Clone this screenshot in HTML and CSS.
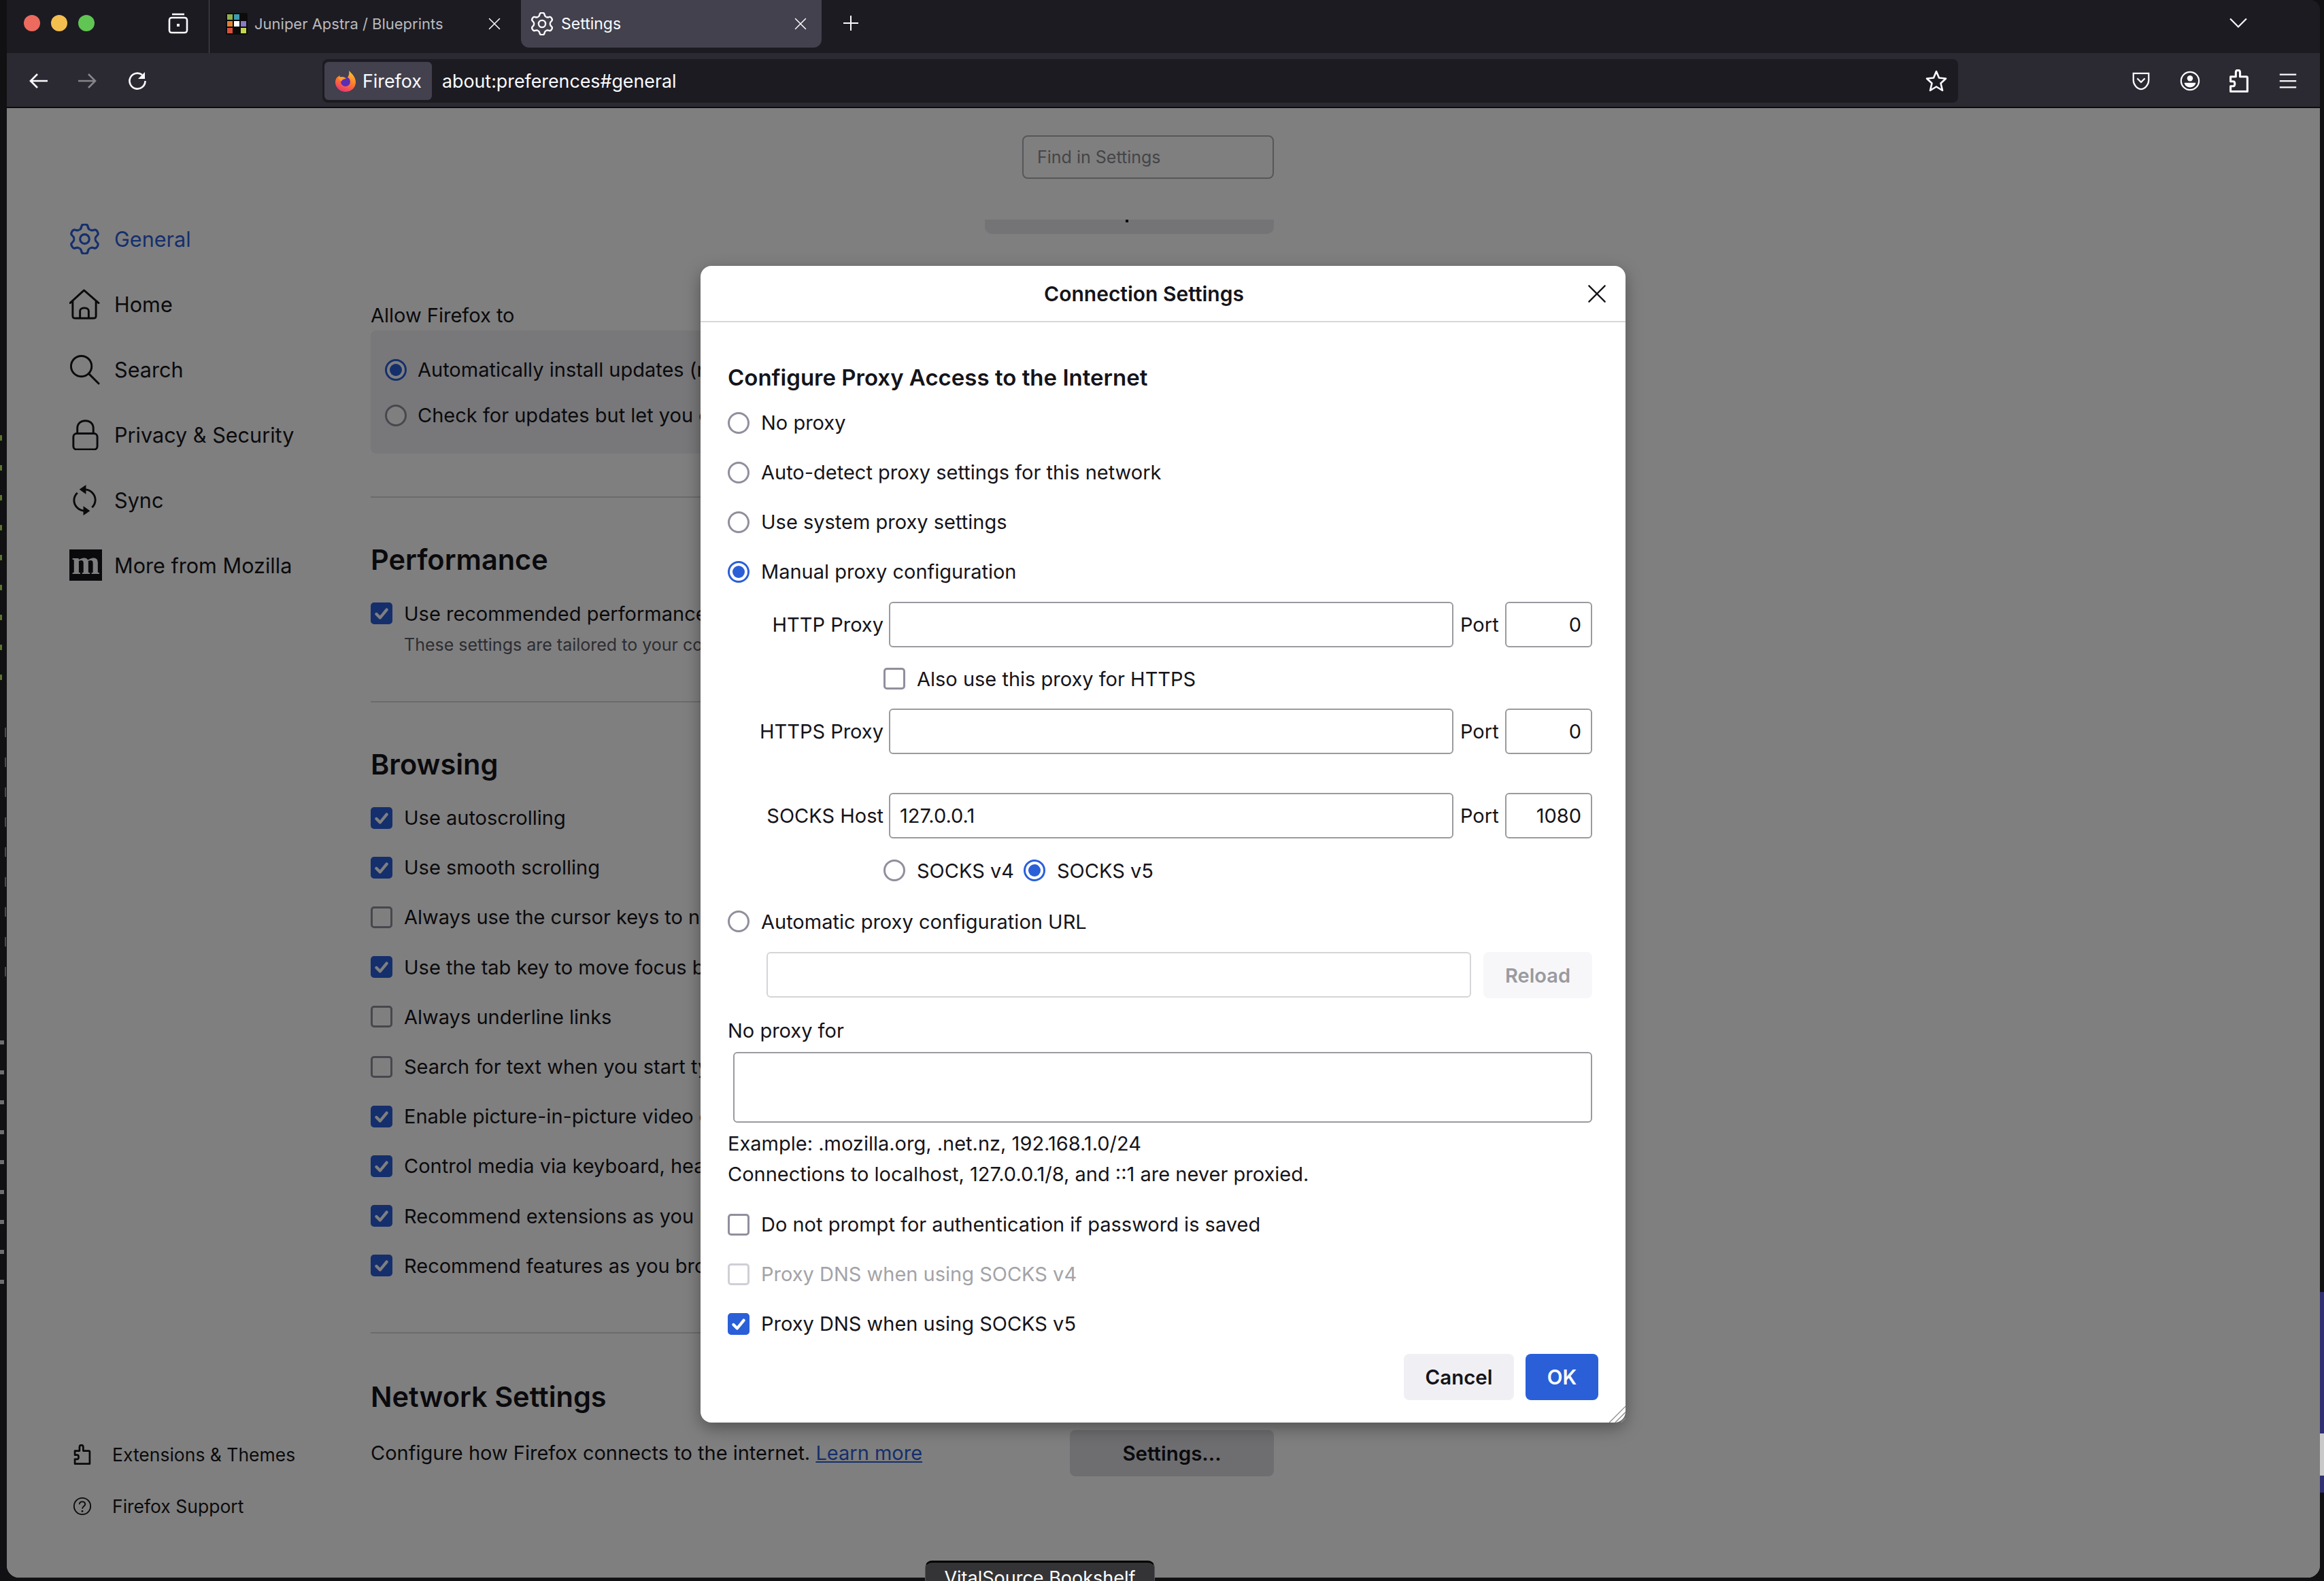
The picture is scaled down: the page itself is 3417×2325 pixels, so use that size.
FILE: index.html
```html
<!DOCTYPE html>
<html lang="en">
<head>
    <meta charset="UTF-8">
    <title>Settings</title>
    <link rel="stylesheet" href="styles.css">
</head>
<body>

    <svg class="sprite" width="0" height="0">
        <symbol id="gear" viewBox="2 1.4 20 21.2">
            <g fill="none" stroke="currentColor" stroke-width="1.5" stroke-linejoin="round">
                <path d="M8.25 5.5C9.5 5.2 9.6 4.5 9.8 3.3C10 1.3 14 1.3 14.2 3.3C14.4 4.5 14.5 5.2 15.75 5.5"/>
                <path d="M8.25 5.5C9.5 5.2 9.6 4.5 9.8 3.3C10 1.3 14 1.3 14.2 3.3C14.4 4.5 14.5 5.2 15.75 5.5" transform="rotate(60 12 12)"/>
                <path d="M8.25 5.5C9.5 5.2 9.6 4.5 9.8 3.3C10 1.3 14 1.3 14.2 3.3C14.4 4.5 14.5 5.2 15.75 5.5" transform="rotate(120 12 12)"/>
                <path d="M8.25 5.5C9.5 5.2 9.6 4.5 9.8 3.3C10 1.3 14 1.3 14.2 3.3C14.4 4.5 14.5 5.2 15.75 5.5" transform="rotate(180 12 12)"/>
                <path d="M8.25 5.5C9.5 5.2 9.6 4.5 9.8 3.3C10 1.3 14 1.3 14.2 3.3C14.4 4.5 14.5 5.2 15.75 5.5" transform="rotate(240 12 12)"/>
                <path d="M8.25 5.5C9.5 5.2 9.6 4.5 9.8 3.3C10 1.3 14 1.3 14.2 3.3C14.4 4.5 14.5 5.2 15.75 5.5" transform="rotate(300 12 12)"/>
                <circle cx="12" cy="12" r="3.2"/>
            </g>
        </symbol>
        <symbol id="puzzle" viewBox="3 1 18 22">
            <path fill="none" stroke="currentColor" stroke-width="2" stroke-linejoin="round" d="M4 22V17H6.5C8.5 17 8.5 12.5 6.5 12.5H4V8H9V4C9 1 13 1 13 4V8H19C20 8 20 8.5 20 9V22Z"/>
        </symbol>
        <symbol id="close" viewBox="0 0 24 24">
            <path fill="none" stroke="currentColor" stroke-width="2" stroke-linecap="round" d="M2 2L22 22M22 2L2 22"/>
        </symbol>
        <symbol id="tick" viewBox="0 0 24 24">
            <path fill="none" stroke="currentColor" stroke-width="4" stroke-linecap="round" stroke-linejoin="round" d="M5 13L10 18L19 7"/>
        </symbol>
    </svg>

    <div class="desktop">
        <div class="edge-left"></div>

        <div class="browser">
            <div class="tabbar">
                <div class="lights">
                    <span class="light red"></span>
                    <span class="light yellow"></span>
                    <span class="light green"></span>
                </div>
                <svg class="view-icon" viewBox="0 0 32 32">
                    <path fill="none" stroke="#fbfbfe" stroke-width="2.6" d="M3 12C3 9 4 8 7 8H25C28 8 29 9 29 12V26C29 29 28 30 25 30H7C4 30 3 29 3 26Z"/>
                    <path fill="none" stroke="#fbfbfe" stroke-width="2.6" d="M7 3H25"/>
                    <rect x="14" y="17" width="4" height="4" fill="#fbfbfe"/>
                </svg>
                <span class="tab-sep"></span>

                <div class="tab">
                    <svg class="favicon" viewBox="0 0 32 32">
                        <rect width="32" height="32" rx="2" fill="#0c0c0c"/>
                        <rect x="2" y="2" width="8" height="8" fill="#8fb04c"/>
                        <rect x="12" y="2" width="8" height="8" fill="#3f9bb0"/>
                        <rect x="2" y="12" width="8" height="8" fill="#e0822f"/>
                        <rect x="12" y="12" width="8" height="8" fill="#ffffff"/>
                        <rect x="22" y="12" width="8" height="8" fill="#8c78cc"/>
                        <rect x="2" y="22" width="8" height="8" fill="#d9503a"/>
                        <rect x="22" y="22" width="8" height="8" fill="#c6d64c"/>
                    </svg>
                    <span class="tab-title">Juniper Apstra / Blueprints</span>
                    <svg class="tab-close"><use href="#close"/></svg>
                </div>

                <div class="tab selected">
                    <svg class="tab-gear"><use href="#gear"/></svg>
                    <span class="tab-title">Settings</span>
                    <svg class="tab-close"><use href="#close"/></svg>
                </div>

                <svg class="new-tab" viewBox="0 0 24 24">
                    <path fill="none" stroke="#fbfbfe" stroke-width="2" d="M12 1V23M1 12H23"/>
                </svg>
                <svg class="tabs-menu" viewBox="0 0 24 14">
                    <path fill="none" stroke="#fbfbfe" stroke-width="2" d="M1 1L12 12L23 1"/>
                </svg>
            </div>

            <div class="toolbar">
                <svg class="nav-icon" viewBox="0 0 30 30">
                    <path fill="none" stroke="#fbfbfe" stroke-width="2.6" d="M28 15H4M13 5L3 15L13 25"/>
                </svg>
                <svg class="nav-icon off" viewBox="0 0 30 30">
                    <path fill="none" stroke="#85858b" stroke-width="2.6" d="M2 15H26M17 5L27 15L17 25"/>
                </svg>
                <svg class="nav-icon" viewBox="0 0 30 30">
                    <path fill="none" stroke="#fbfbfe" stroke-width="2.6" d="M22 6A11.5 11.5 0 1 0 26.5 15"/>
                    <path fill="#fbfbfe" d="M26 2V12H16Z"/>
                </svg>

                <div class="urlbar">
                    <div class="identity">
                        <svg class="fx-logo" viewBox="0 0 32 32">
                            <defs>
                                <linearGradient id="fxBody" x1="0.7" y1="0" x2="0.3" y2="1">
                                    <stop offset="0" stop-color="#ffc22e"/>
                                    <stop offset="0.5" stop-color="#ff7a2a"/>
                                    <stop offset="1" stop-color="#e8307a"/>
                                </linearGradient>
                            </defs>
                            <path fill="url(#fxBody)" d="M21 1C25 5 31 10 31 18A15 14 0 1 1 2 13C3 11 5 9 8 8L7 12C11 9 15 10 18 12C21 9 22 5 21 1Z"/>
                            <circle cx="16" cy="17" r="7" fill="#5a2db4"/>
                            <path fill="#ff9a2a" d="M5 11C9 9 15 10 17 13C13 13 11 14 10 17C8 15 6 13 5 11Z"/>
                        </svg>
                        <span>Firefox</span>
                    </div>
                    <span class="url">about:preferences#general</span>
                    <svg class="star" viewBox="0 0 32 32">
                        <path fill="none" stroke="#fbfbfe" stroke-width="2.6" stroke-linejoin="round" d="M16 2L20 11.5L30 12.5L22.5 19.5L25 30L16 24.5L7 30L9.5 19.5L2 12.5L12 11.5Z"/>
                    </svg>
                </div>

                <div class="toolbar-right">
                    <svg class="tool-icon" viewBox="0 0 32 32">
                        <path fill="none" stroke="#fbfbfe" stroke-width="2.4" d="M4 4H28V15C28 22 22 29 16 29C10 29 4 22 4 15Z"/>
                        <path fill="none" stroke="#fbfbfe" stroke-width="2.4" d="M10 12L16 18L22 12"/>
                    </svg>
                    <svg class="tool-icon" viewBox="0 0 32 32">
                        <circle cx="16" cy="16" r="14" fill="none" stroke="#fbfbfe" stroke-width="2.4"/>
                        <circle cx="16" cy="12" r="4.5" fill="#fbfbfe"/>
                        <path fill="#fbfbfe" d="M7 19H25C24 24 20 26 16 26C12 26 8 24 7 19Z"/>
                    </svg>
                    <svg class="tool-icon puzzle-tool"><use href="#puzzle"/></svg>
                    <svg class="tool-icon" viewBox="0 0 32 32">
                        <path fill="none" stroke="#fbfbfe" stroke-width="2.4" d="M3 6H29M3 16H29M3 26H29"/>
                    </svg>
                </div>
            </div>

            <div class="content">
                <aside class="sidebar">
                    <nav class="cats">
                        <a class="cat active">
                            <svg class="cat-icon"><use href="#gear"/></svg>
                            General
                        </a>
                        <a class="cat">
                            <svg class="cat-icon" viewBox="0 0 46 46">
                                <path fill="none" stroke="currentColor" stroke-width="3" stroke-linejoin="round" stroke-linecap="round" d="M1 21L22 2L44 21M5 18V40C5 43 6 44 9 44H36C39 44 40 43 40 40V18M16 44V33C16 27 29 27 29 33V44"/>
                            </svg>
                            Home
                        </a>
                        <a class="cat">
                            <svg class="cat-icon" viewBox="0 0 46 46">
                                <circle cx="18" cy="18" r="15.5" fill="none" stroke="currentColor" stroke-width="3"/>
                                <path fill="none" stroke="currentColor" stroke-width="3" stroke-linecap="round" d="M29 29L44 44"/>
                            </svg>
                            Search
                        </a>
                        <a class="cat">
                            <svg class="cat-icon" viewBox="0 0 46 46">
                                <rect x="6" y="21" width="36" height="24" rx="5" fill="none" stroke="currentColor" stroke-width="3"/>
                                <path fill="none" stroke="currentColor" stroke-width="3" d="M12 21V13C12 -2 36 -2 36 13V21"/>
                            </svg>
                            Privacy &amp; Security
                        </a>
                        <a class="cat">
                            <svg class="cat-icon" viewBox="0 0 46 46">
                                <path fill="none" stroke="currentColor" stroke-width="3" d="M23 7A16 16 0 0 1 39 23A16 16 0 0 1 34 34M23 39A16 16 0 0 1 7 23A16 16 0 0 1 12 12"/>
                                <path fill="currentColor" d="M25 0V14L15 7ZM21 32V46L31 39Z"/>
                            </svg>
                            Sync
                        </a>
                        <a class="cat">
                            <span class="moz-logo">m</span>
                            More from Mozilla
                        </a>
                    </nav>

                    <div class="side-footer">
                        <a class="foot-link">
                            <svg class="foot-icon"><use href="#puzzle"/></svg>
                            Extensions &amp; Themes
                        </a>
                        <a class="foot-link">
                            <svg class="foot-icon" viewBox="0 0 30 30">
                                <circle cx="15" cy="15" r="13" fill="none" stroke="currentColor" stroke-width="2"/>
                                <path fill="none" stroke="currentColor" stroke-width="2" d="M10.5 12C10.5 6.5 19.5 6.5 19.5 12C19.5 15 15 15 15 19"/>
                                <circle cx="15" cy="23" r="1.5" fill="currentColor"/>
                            </svg>
                            Firefox Support
                        </a>
                    </div>
                </aside>

                <main class="prefs">
                    <div class="find-row">
                        <input class="find" type="text" placeholder="Find in Settings">
                    </div>
                    <div class="clipped-btn"><i></i></div>

                    <p class="allow-label">Allow Firefox to</p>
                    <div class="update-box">
                        <div class="pref update-row"><span class="radio on"></span>Automatically install updates (recommended)</div>
                        <div class="pref update-row"><span class="radio"></span>Check for updates but let you choose to install them</div>
                    </div>

                    <hr class="rule">

                    <h2 class="pref-head">Performance</h2>
                    <div class="pref perf-row"><span class="check on"><svg><use href="#tick"/></svg></span>Use recommended performance settings</div>
                    <p class="pref-sub">These settings are tailored to your computer's hardware and operating system.</p>

                    <hr class="rule">

                    <h2 class="pref-head">Browsing</h2>
                    <div class="browse-list">
                        <div class="pref browse-row"><span class="check on"><svg><use href="#tick"/></svg></span>Use autoscrolling</div>
                        <div class="pref browse-row"><span class="check on"><svg><use href="#tick"/></svg></span>Use smooth scrolling</div>
                        <div class="pref browse-row"><span class="check"></span>Always use the cursor keys to navigate within pages</div>
                        <div class="pref browse-row"><span class="check on"><svg><use href="#tick"/></svg></span>Use the tab key to move focus between form controls</div>
                        <div class="pref browse-row"><span class="check"></span>Always underline links</div>
                        <div class="pref browse-row"><span class="check"></span>Search for text when you start typing</div>
                        <div class="pref browse-row"><span class="check on"><svg><use href="#tick"/></svg></span>Enable picture-in-picture video controls</div>
                        <div class="pref browse-row"><span class="check on"><svg><use href="#tick"/></svg></span>Control media via keyboard, headset, or virtual interface</div>
                        <div class="pref browse-row"><span class="check on"><svg><use href="#tick"/></svg></span>Recommend extensions as you browse</div>
                        <div class="pref browse-row"><span class="check on"><svg><use href="#tick"/></svg></span>Recommend features as you browse</div>
                    </div>

                    <hr class="rule">

                    <h2 class="pref-head net-head">Network Settings</h2>
                    <div class="net-row">
                        <span class="pref">Configure how Firefox connects to the internet.&nbsp;<a class="learn">Learn more</a></span>
                        <button class="settings-btn">Settings...</button>
                    </div>
                </main>

                <div class="scrim"></div>

                <div class="dialog">
                    <div class="dialog-head">
                        <div class="dialog-title">Connection Settings</div>
                        <div class="dialog-close"><svg><use href="#close"/></svg></div>
                    </div>

                    <div class="dialog-body">
                        <h3 class="proxy-head">Configure Proxy Access to the Internet</h3>

                        <div class="proxy-modes">
                            <div class="opt"><span class="radio"></span>No proxy</div>
                            <div class="opt"><span class="radio"></span>Auto-detect proxy settings for this network</div>
                            <div class="opt"><span class="radio"></span>Use system proxy settings</div>
                            <div class="opt"><span class="radio on"></span>Manual proxy configuration</div>
                        </div>

                        <div class="proxy-row http-row">
                            <label class="proxy-label">HTTP Proxy</label>
                            <input class="field grow" type="text">
                            <label class="port-label">Port</label>
                            <input class="field port" type="text" value="0">
                        </div>
                        <div class="opt indented also-row"><span class="check"></span>Also use this proxy for HTTPS</div>
                        <div class="proxy-row https-row">
                            <label class="proxy-label">HTTPS Proxy</label>
                            <input class="field grow" type="text">
                            <label class="port-label">Port</label>
                            <input class="field port" type="text" value="0">
                        </div>
                        <div class="proxy-row socks-row">
                            <label class="proxy-label">SOCKS Host</label>
                            <input class="field grow" type="text" value="127.0.0.1">
                            <label class="port-label">Port</label>
                            <input class="field port" type="text" value="1080">
                        </div>
                        <div class="opt indented socks-versions">
                            <span class="radio"></span>SOCKS v4
                            <span class="radio on second"></span>SOCKS v5
                        </div>

                        <div class="opt auto-row"><span class="radio"></span>Automatic proxy configuration URL</div>
                        <div class="url-row">
                            <input class="field grow faded" type="text">
                            <button class="reload-btn">Reload</button>
                        </div>

                        <div class="line no-proxy-label">No proxy for</div>
                        <textarea class="no-proxy"></textarea>
                        <div class="line example">Example: .mozilla.org, .net.nz, 192.168.1.0/24</div>
                        <div class="line never">Connections to localhost, 127.0.0.1/8, and ::1 are never proxied.</div>

                        <div class="auth-list">
                            <div class="opt"><span class="check"></span>Do not prompt for authentication if password is saved</div>
                            <div class="opt disabled"><span class="check"></span>Proxy DNS when using SOCKS v4</div>
                            <div class="opt"><span class="check on"><svg><use href="#tick"/></svg></span>Proxy DNS when using SOCKS v5</div>
                        </div>

                        <div class="dialog-buttons">
                            <button class="btn">Cancel</button>
                            <button class="btn primary">OK</button>
                        </div>
                    </div>

                    <svg class="resizer" viewBox="0 0 24 24">
                        <path fill="none" stroke="#8a8a8a" stroke-width="1.2" d="M24 2L2 24M24 10L10 24M24 18L18 24"/>
                    </svg>
                </div>
            </div>
        </div>

        <div class="edge-right">
            <div class="wall"><i></i></div>
        </div>

        <div class="dock-tip">VitalSource Bookshelf</div>
    </div>

</body>
</html>
```

FILE: styles.css
```css
* {
    box-sizing: border-box;
}

html, body {
    margin: 0;
    height: 100%;
}

body {
    background: #111113;
    font-family: Inter, "Noto Sans", sans-serif;
    color: #15141a;
    overflow: hidden;
}

.sprite {
    position: absolute;
}

.desktop {
    position: relative;
    display: flex;
    width: 3417px;
    height: 2325px;
    overflow: hidden;
}

.edge-left {
    width: 10px;
    height: 2320px;
    flex: none;
    background:
        repeating-linear-gradient(#5d7330 0 8px, transparent 8px 44px) 0 640px / 3px 370px no-repeat,
        repeating-linear-gradient(#4c4c4c 0 14px, transparent 14px 44px) 7px 1070px / 2px 390px no-repeat,
        repeating-linear-gradient(#6e6e6e 0 6px, transparent 6px 44px) 0 1530px / 6px 370px no-repeat,
        #111113;
}

.edge-right {
    flex: none;
    width: 6px;
    display: flex;
    flex-direction: column;
    padding-top: 1900px;
}

.wall {
    height: 295px;
    background: #2f2f72;
    padding-top: 208px;
}

.wall i {
    display: block;
    height: 62px;
    background: #c9c9c9;
}

.browser {
    flex: none;
    width: 3401px;
    height: 2320px;
    display: flex;
    flex-direction: column;
    border-radius: 0 14px 18px 18px;
    overflow: hidden;
}

/* tab strip */
.tabbar {
    display: flex;
    align-items: center;
    height: 78px;
    flex: none;
    background: #1c1b22;
    padding-left: 25px;
}

.lights {
    display: flex;
    gap: 16px;
    width: 211px;
    margin-top: -10px;
}

.light {
    width: 24px;
    height: 24px;
    border-radius: 50%;
}

.red { background: #ed6a5e; }
.yellow { background: #f4bf4f; }
.green { background: #61c554; }

.view-icon {
    width: 32px;
    height: 32px;
    margin: -10px 29px 0 0;
}

.tab-sep {
    width: 1px;
    height: 78px;
    background: #4a4a50;
}

.tab {
    display: flex;
    align-items: center;
    width: 450px;
    height: 70px;
    margin-top: -8px;
    padding-left: 24px;
    font-size: 22px;
    color: #b9b9bd;
}

.tab.selected {
    width: 442px;
    padding-left: 15px;
    margin-left: 8px;
    font-size: 23px;
    color: #fbfbfe;
    background: #42414d;
    border-radius: 0 0 12px 12px;
}

.favicon {
    width: 32px;
    height: 32px;
    margin-right: 10px;
}

.tab-gear {
    width: 32px;
    height: 34px;
    margin-right: 12px;
}

.tab-title {
    flex: 1;
    white-space: nowrap;
}

.tab-close {
    width: 18px;
    height: 18px;
    margin-right: 22px;
    color: #fbfbfe;
}

.new-tab {
    width: 24px;
    height: 24px;
    margin: -10px 0 0 31px;
}

.tabs-menu {
    width: 26px;
    height: 16px;
    margin: -10px 107px 0 auto;
}

/* nav bar */
.toolbar {
    display: flex;
    align-items: center;
    height: 81px;
    flex: none;
    background: #2b2a33;
    border-bottom: 2px solid #0c0c0e;
    padding: 2px 0 0 32px;
}

.nav-icon {
    width: 30px;
    height: 30px;
    margin-right: 41px;
}

.nav-icon:nth-child(3) {
    margin-right: 0;
    margin-left: 3px;
}

.urlbar {
    display: flex;
    align-items: center;
    width: 2405px;
    height: 64px;
    margin-left: 257px;
    padding-left: 3px;
    background: #1c1b22;
    border-radius: 8px;
    color: #fbfbfe;
    font-size: 26.8px;
}

.identity {
    display: flex;
    align-items: center;
    gap: 9px;
    height: 56px;
    width: 158px;
    padding-left: 15px;
    background: #42414d;
    border-radius: 6px;
}

.fx-logo {
    width: 32px;
    height: 34px;
}

.url {
    margin-left: 15px;
}

.star {
    width: 32px;
    height: 32px;
    margin-left: auto;
    margin-right: 16px;
}

.toolbar-right {
    display: flex;
    align-items: center;
    gap: 42px;
    margin-left: 254px;
    color: #fbfbfe;
}

.tool-icon {
    width: 30px;
    height: 32px;
}

.puzzle-tool {
    height: 34px;
}

/* settings page */
.content {
    position: relative;
    flex: 1;
    display: flex;
    background: #ffffff;
    overflow: hidden;
}

.sidebar {
    width: 535px;
    flex: none;
    display: flex;
    flex-direction: column;
    padding: 144px 0 67px 92px;
}

.cat {
    display: flex;
    align-items: center;
    height: 96px;
    gap: 21px;
    font-size: 30.6px;
    white-space: nowrap;
}

.cat.active {
    color: #2a5fd8;
}

.cat-icon {
    width: 45px;
    height: 45px;
    flex: none;
}

.moz-logo {
    width: 48px;
    height: 46px;
    margin-right: -3px;
    flex: none;
    background: #15141a;
    color: #ffffff;
    font: bold 50px/38px "Liberation Serif", serif;
    text-align: center;
}

.side-footer {
    margin-top: auto;
}

.foot-link {
    display: flex;
    align-items: center;
    height: 76px;
    gap: 30px;
    font-size: 26.5px;
    padding-left: 5px;
}

.foot-icon {
    width: 28px;
    height: 30px;
    flex: none;
}

.prefs {
    width: 1328px;
    flex: none;
    display: flex;
    flex-direction: column;
    padding-top: 40px;
}

.find-row {
    display: flex;
    justify-content: flex-end;
}

.find {
    width: 370px;
    height: 64px;
    padding: 0 20px;
    border: 2px solid #afafb3;
    border-radius: 8px;
    font: 25px Inter, sans-serif;
    background: transparent;
}

.find::placeholder {
    color: #8a8a90;
    opacity: 1;
}

.clipped-btn {
    position: relative;
    width: 425px;
    height: 21px;
    margin: 60px 0 0 auto;
    background: #e9e9ec;
    border-radius: 0 0 10px 10px;
}

.clipped-btn i {
    position: absolute;
    left: 207px;
    top: 0;
    width: 4px;
    height: 4px;
    background: #15141a;
}

.allow-label {
    margin: 100px 0 0;
    font-size: 29px;
    line-height: 40px;
}

.pref {
    display: flex;
    align-items: center;
    font-size: 29px;
    white-space: nowrap;
}

.update-box {
    margin-top: 2px;
    height: 181px;
    padding: 24px 21px;
    background: #f0f0f4;
    border-radius: 8px;
}

.update-row {
    height: 67px;
}

.update-row .radio {
    margin-right: 16px;
}

.rule {
    width: 100%;
    height: 2px;
    margin: 63px 0 0;
    border: 0;
    background: #d7d7db;
}

.pref-head {
    margin: 61px 0 0;
    font-size: 41.5px;
    line-height: 60px;
    font-weight: 600;
}

.perf-row {
    height: 40px;
    margin-top: 29px;
}

.pref-sub {
    margin: 6px 0 0 49px;
    font-size: 25px;
    line-height: 40px;
    color: #5b5b66;
    white-space: nowrap;
}

.browse-list {
    margin-top: 12px;
}

.browse-row {
    height: 73.2px;
}

.browse-list + .rule {
    margin-top: 61px;
}

.net-head {
    margin-top: 63px;
}

.net-row {
    display: flex;
    align-items: center;
    justify-content: space-between;
    margin-top: 19px;
}

.learn {
    color: #2a5fd8;
    text-decoration: underline;
}

.settings-btn {
    width: 300px;
    height: 68px;
    border: 0;
    border-radius: 8px;
    background: #dcdce0;
    color: #15141a;
    font: 600 29.5px Inter, sans-serif;
}

.radio, .check {
    position: relative;
    flex: none;
    width: 32px;
    height: 32px;
    margin-right: 17px;
    border: 3px solid #8f8f9d;
    background: #ffffff;
}

.radio {
    border-radius: 50%;
}

.radio.on {
    border-color: #2a5fd8;
}

.radio.on::after {
    content: "";
    position: absolute;
    inset: 4px;
    border-radius: 50%;
    background: #2a5fd8;
}

.check {
    border-radius: 5px;
}

.check.on {
    border-color: #2a5fd8;
    background: #2a5fd8;
    color: #ffffff;
}

.check svg {
    display: block;
    width: 26px;
    height: 26px;
}

.scrim {
    position: absolute;
    inset: 0;
    background: rgba(0, 0, 0, 0.5);
}

/* connection settings dialog */
.dialog {
    position: absolute;
    left: 1020px;
    top: 232px;
    width: 1360px;
    height: 1701px;
    background: #ffffff;
    border-radius: 16px;
    box-shadow: 0 8px 24px rgba(0, 0, 0, 0.35);
    font-size: 29px;
}

.dialog-head {
    display: flex;
    align-items: center;
    height: 83px;
    border-bottom: 2px solid #d7d7db;
}

.dialog-title {
    flex: 1;
    text-align: center;
    font-size: 30px;
    font-weight: 600;
}

.dialog-close {
    width: 56px;
}

.dialog-close svg {
    display: block;
    width: 28px;
    height: 28px;
}

.dialog-body {
    padding: 0 49px 0 40px;
}

.proxy-head {
    margin: 56px 0 0;
    font-size: 33px;
    line-height: 50px;
    font-weight: 600;
}

.proxy-modes {
    margin-top: 5px;
}

.opt {
    display: flex;
    align-items: center;
    height: 73px;
    white-space: nowrap;
}

.proxy-row {
    display: flex;
    align-items: center;
    gap: 10px;
    height: 67px;
}

.proxy-label {
    width: 229px;
    margin-right: -2px;
    text-align: right;
}

.port-label {
    width: 56px;
    flex: none;
}

.field {
    height: 67px;
    min-width: 0;
    padding: 0 14px;
    border: 2px solid #9a9aa0;
    border-radius: 6px;
    background: #ffffff;
    color: #15141a;
    font: 29px Inter, sans-serif;
}

.grow {
    flex: 1;
}

.port {
    width: 128px;
    flex: none;
    text-align: right;
}

.http-row {
    margin-top: 8px;
}

.indented {
    margin-left: 229px;
    height: 40px;
}

.also-row {
    margin-top: 26px;
}

.https-row {
    margin-top: 24px;
}

.socks-row {
    margin-top: 57px;
}

.socks-versions {
    margin-top: 27px;
}

.radio.second {
    margin-left: 14px;
}

.auto-row {
    height: 40px;
    margin-top: 35px;
}

.url-row {
    display: flex;
    gap: 18px;
    margin: 25px 0 0 57px;
}

.faded {
    border-color: #d5d5d8;
}

.reload-btn {
    width: 160px;
    height: 68px;
    border: 0;
    border-radius: 8px;
    background: #f7f7f9;
    color: #9a9aa0;
    font: 600 29px Inter, sans-serif;
}

.line {
    line-height: 40px;
}

.no-proxy-label {
    margin-top: 28px;
}

.no-proxy {
    display: block;
    width: calc(100% - 8px);
    height: 104px;
    margin: 11px 0 0 8px;
    border: 2px solid #9a9aa0;
    border-radius: 6px;
    resize: none;
}

.example {
    margin-top: 11px;
}

.never {
    margin-top: 5px;
}

.auth-list {
    margin-top: 17px;
}

.disabled {
    color: #a3a3a8;
}

.disabled .check {
    border-color: #cfcfd6;
}

.dialog-buttons {
    display: flex;
    justify-content: flex-end;
    gap: 17px;
    margin: 8px -9px 0 0;
}

.btn {
    height: 68px;
    width: 162px;
    border: 0;
    border-radius: 8px;
    background: #f0f0f4;
    color: #15141a;
    font: 600 29.5px Inter, sans-serif;
}

.btn.primary {
    width: 107px;
    background: #2a5fd8;
    color: #ffffff;
}

.resizer {
    position: absolute;
    right: 0;
    bottom: 0;
    width: 26px;
    height: 26px;
}

.dock-tip {
    position: absolute;
    left: 1360px;
    top: 2295px;
    width: 338px;
    height: 50px;
    padding-top: 6px;
    background: #343436;
    border: 1px solid #55555a;
    border-top: 3px solid #000000;
    border-radius: 10px 10px 0 0;
    color: #ffffff;
    font-size: 27px;
    text-align: center;
}
```
